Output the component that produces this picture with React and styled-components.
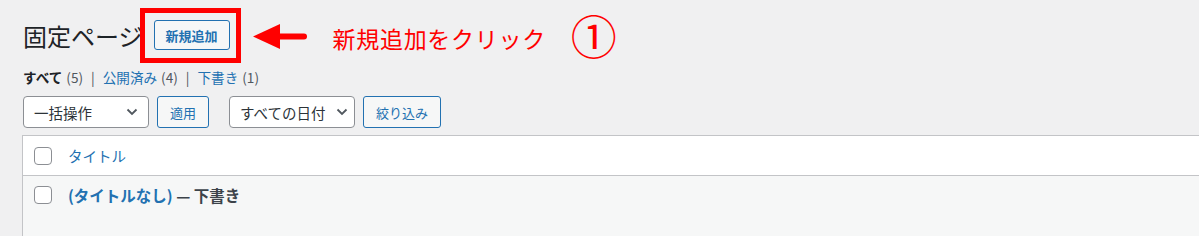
import React from 'react';
import styled, { createGlobalStyle } from "styled-components";

const GlobalStyle = createGlobalStyle`
    body {
        margin: 0;
        background: #f0f0f1;
        font-family: "Noto Sans CJK JP", "Noto Sans", sans-serif;
        color: #3c434a;
        overflow: hidden;
    }
`

const Wrap = styled.div`
    padding: 8px 0 0 22px;
`

const TitleRow = styled.div`
    display: flex;
    align-items: center;
    height: 55px;
`

const Heading = styled.h1`
    margin: 0 0 0 1px;
    font-size: 24px;
    font-weight: 400;
    color: #1d2327;
    line-height: 1;
    white-space: nowrap;
`

const Highlight = styled.div`
    position: relative;
    margin-left: -3px;
    border: 5px solid #ff0000;
    padding: 7px 6px 8px 9px;
    background: #f0f0f1;
    display: flex;
`

const Button = styled.button`
    height: ${p => p.$h || 32}px;
    padding: 0 ${p => p.$pad || 12}px;
    border: 1px solid #2271b1;
    border-radius: 3px;
    background: #f6f7f7;
    color: #2271b1;
    font-family: inherit;
    font-size: 13px;
    font-weight: ${p => p.$bold ? 700 : 400};
    line-height: 1;
    cursor: pointer;
`

const Arrow = styled.svg`
    margin-left: 12px;
    flex: none;
    margin-top: 3px;
`

const Note = styled.span`
    margin-left: 24px;
    color: #ff0000;
    font-size: 23px;
    letter-spacing: 0.7px;
    margin-top: 4px;
`

const Step = styled.span`
    margin-left: 25px;
    color: #ff0000;
    font-size: 46px;
    line-height: 1;
    margin-top: -4px;
`

const SubNav = styled.ul`
    list-style: none;
    margin: 4px 0 0 1px;
    padding: 0;
    display: flex;
    align-items: center;
    font-size: 13.6px;
    height: 20px;
    color: #50575e;
`

const SubItem = styled.li`
    display: flex;
    align-items: center;
`

const SubLink = styled.a`
    color: ${p => p.$current ? '#1d2327' : '#2271b1'};
    font-weight: ${p => p.$current ? 700 : 400};
    text-decoration: none;
`

const Count = styled.span`
    color: #50575e;
    margin-left: 4px;
`

const Sep = styled.span`
    margin: 0 8px;
    color: #50575e;
`

const TableNav = styled.div`
    display: flex;
    align-items: center;
    margin: 9px 0 0 1px;
    height: 32px;
`

const Group = styled.div`
    display: flex;
    gap: 8px;
    margin-right: 20px;
`

const Select = styled.div`
    box-sizing: border-box;
    width: 126px;
    height: 32px;
    border: 1px solid #8c8f94;
    border-radius: 4px;
    background: #fff;
    display: flex;
    align-items: center;
    justify-content: space-between;
    padding: 0 ${p => p.$right || 10}px 0 10px;
    font-size: 14.5px;
    color: #2c3338;
`

const Table = styled.div`
    margin-top: 7px;
    border: 1px solid #c3c4c7;
    border-right: 0;
    background: #fff;
`

const Row = styled.div`
    display: flex;
    align-items: ${p => p.$top ? 'flex-start' : 'center'};
    height: ${p => p.$h}px;
    padding: ${p => p.$top ? '10px' : '0'} 0 0 11px;
    box-sizing: border-box;
    background: ${p => p.$alt ? '#f6f7f7' : '#fff'};
    border-bottom: ${p => p.$line ? '1px solid #c3c4c7' : '0'};
`

const Check = styled.span`
    box-sizing: border-box;
    width: 18px;
    height: 18px;
    border: 1px solid #8c8f94;
    border-radius: 4px;
    background: #fff;
    flex: none;
    margin-right: 16px;
`

const ColLink = styled.a`
    color: #2271b1;
    font-size: 14.5px;
    text-decoration: none;
`

const RowTitle = styled.span`
    font-size: 15.5px;
    line-height: 18px;
    font-weight: 700;
    color: #3c434a;
`

const TitleLink = styled.a`
    color: #2271b1;
    text-decoration: none;
`

const Chevron = () => (
    <svg width="12" height="8" viewBox="0 0 12 8">
        <path d="M1.5 1.5 L6 6 L10.5 1.5" fill="none" stroke="#50575e" strokeWidth="1.8" />
    </svg>
)

const App = () => {
    return (
        <Wrap>
            <GlobalStyle />
            <TitleRow>
                <Heading>固定ページ</Heading>
                <Highlight>
                    <Button $h={30} $pad={11} $bold>新規追加</Button>
                </Highlight>
                <Arrow width="56" height="26" viewBox="0 0 56 26">
                    <polygon points="0,12.5 27,0 27,25" fill="#ff0000" />
                    <line x1="25" y1="12.5" x2="51" y2="12.5" stroke="#ff0000" strokeWidth="6" strokeLinecap="round" />
                </Arrow>
                <Note>新規追加をクリック</Note>
                <Step>①</Step>
            </TitleRow>
            <SubNav>
                <SubItem><SubLink $current>すべて</SubLink><Count>(5)</Count><Sep>|</Sep></SubItem>
                <SubItem><SubLink>公開済み</SubLink><Count>(4)</Count><Sep>|</Sep></SubItem>
                <SubItem><SubLink>下書き</SubLink><Count>(1)</Count></SubItem>
            </SubNav>
            <TableNav>
                <Group>
                    <Select>一括操作<Chevron /></Select>
                    <Button>適用</Button>
                </Group>
                <Group>
                    <Select $right={6}>すべての日付<Chevron /></Select>
                    <Button>絞り込み</Button>
                </Group>
            </TableNav>
            <Table>
                <Row $h={40} $line>
                    <Check />
                    <ColLink>タイトル</ColLink>
                </Row>
                <Row $h={70} $alt $top>
                    <Check />
                    <RowTitle><TitleLink>(タイトルなし)</TitleLink> — 下書き</RowTitle>
                </Row>
            </Table>
        </Wrap>
    )
}

export default App;
